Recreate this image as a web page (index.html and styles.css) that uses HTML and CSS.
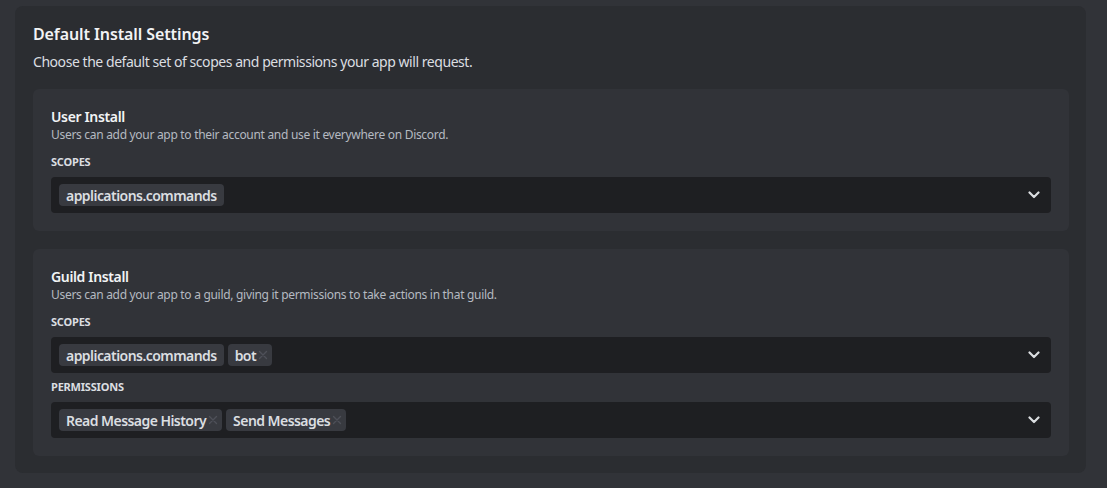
FILE: index.html
```html
<!DOCTYPE html>
<html>
<head>
<meta charset="utf-8">
<link rel="stylesheet" href="styles.css">
</head>
<body>
<div class="panel">
  <h2 class="panel-title">Default Install Settings</h2>
  <p class="panel-sub">Choose the default set of scopes and permissions your app will request.</p>

  <div class="card">
    <h3 class="card-title">User Install</h3>
    <p class="card-desc">Users can add your app to their account and use it everywhere on Discord.</p>
    <div class="label">Scopes</div>
    <div class="select">
      <div class="tags">
        <span class="tag">applications.commands</span>
      </div>
      <svg class="chev" width="12" height="8" viewBox="0 0 12 8"><path d="M1.5 1.5 L6 6 L10.5 1.5" fill="none" stroke="#dbdee1" stroke-width="2.2" stroke-linecap="round" stroke-linejoin="round"/></svg>
    </div>
  </div>

  <div class="card">
    <h3 class="card-title">Guild Install</h3>
    <p class="card-desc">Users can add your app to a guild, giving it permissions to take actions in that guild.</p>
    <div class="label">Scopes</div>
    <div class="select">
      <div class="tags">
        <span class="tag">applications.commands</span>
        <span class="tag">bot<svg class="x" width="10" height="10" viewBox="0 0 10 10"><path d="M1.5 1.5 L8.5 8.5 M8.5 1.5 L1.5 8.5" stroke="#4e5058" stroke-width="1.4" stroke-linecap="round"/></svg></span>
      </div>
      <svg class="chev" width="12" height="8" viewBox="0 0 12 8"><path d="M1.5 1.5 L6 6 L10.5 1.5" fill="none" stroke="#dbdee1" stroke-width="2.2" stroke-linecap="round" stroke-linejoin="round"/></svg>
    </div>
    <div class="label label-2">Permissions</div>
    <div class="select">
      <div class="tags">
        <span class="tag">Read Message History<svg class="x" width="10" height="10" viewBox="0 0 10 10"><path d="M1.5 1.5 L8.5 8.5 M8.5 1.5 L1.5 8.5" stroke="#4e5058" stroke-width="1.4" stroke-linecap="round"/></svg></span>
        <span class="tag">Send Messages<svg class="x" width="10" height="10" viewBox="0 0 10 10"><path d="M1.5 1.5 L8.5 8.5 M8.5 1.5 L1.5 8.5" stroke="#4e5058" stroke-width="1.4" stroke-linecap="round"/></svg></span>
      </div>
      <svg class="chev" width="12" height="8" viewBox="0 0 12 8"><path d="M1.5 1.5 L6 6 L10.5 1.5" fill="none" stroke="#dbdee1" stroke-width="2.2" stroke-linecap="round" stroke-linejoin="round"/></svg>
    </div>
  </div>
</div>
</body>
</html>
```

FILE: styles.css
```css
* { box-sizing: border-box; }
html, body {
  margin: 0;
  padding: 0;
  background: #313338;
  font-family: "Noto Sans", "Open Sans", sans-serif;
  color: #dbdee1;
}
body {
  padding: 6px 21px 15px 15px;
}
.panel {
  background: #2b2d31;
  border-radius: 8px;
  padding: 18px 17px 17px 18px;
}
.panel-title {
  margin: 0;
  font-size: 16px;
  line-height: 20px;
  font-weight: 600;
  letter-spacing: -0.1px;
  color: #f2f3f5;
}
.panel-sub {
  margin: 8px 0 17px;
  font-size: 14px;
  line-height: 20px;
  letter-spacing: -0.45px;
  color: #dbdee1;
}
.card {
  background: #313338;
  border-radius: 6px;
  padding: 18px;
}
.card + .card {
  margin-top: 18px;
}
.card-title {
  margin: 0;
  font-size: 14px;
  line-height: 20px;
  font-weight: 600;
  letter-spacing: -0.35px;
  color: #f2f3f5;
}
.card-desc {
  margin: 0;
  font-size: 12px;
  line-height: 16px;
  letter-spacing: -0.3px;
  color: #b5bac1;
}
.label {
  margin: 12px 0 8px;
  font-size: 11px;
  line-height: 14px;
  font-weight: 700;
  letter-spacing: -0.2px;
  text-transform: uppercase;
  color: #dbdee1;
}
.label-2 {
  margin-top: 7px;
}
.select {
  height: 36px;
  background: #1e1f22;
  border-radius: 4px;
  padding: 0 11px 0 8px;
  display: flex;
  align-items: center;
  justify-content: space-between;
}
.tags {
  display: flex;
  gap: 4px;
}
.tag {
  display: inline-flex;
  align-items: center;
  height: 22px;
  padding: 0 4px 0 7px;
  background: #383a40;
  border-radius: 4px;
  font-size: 14px;
  font-weight: 600;
  letter-spacing: -0.55px;
  color: #dbdee1;
}
.tag:not(:has(.x)) {
  padding-right: 7px;
}
.x {
  margin-left: 2px;
}
.chev {
  display: block;
}
```
